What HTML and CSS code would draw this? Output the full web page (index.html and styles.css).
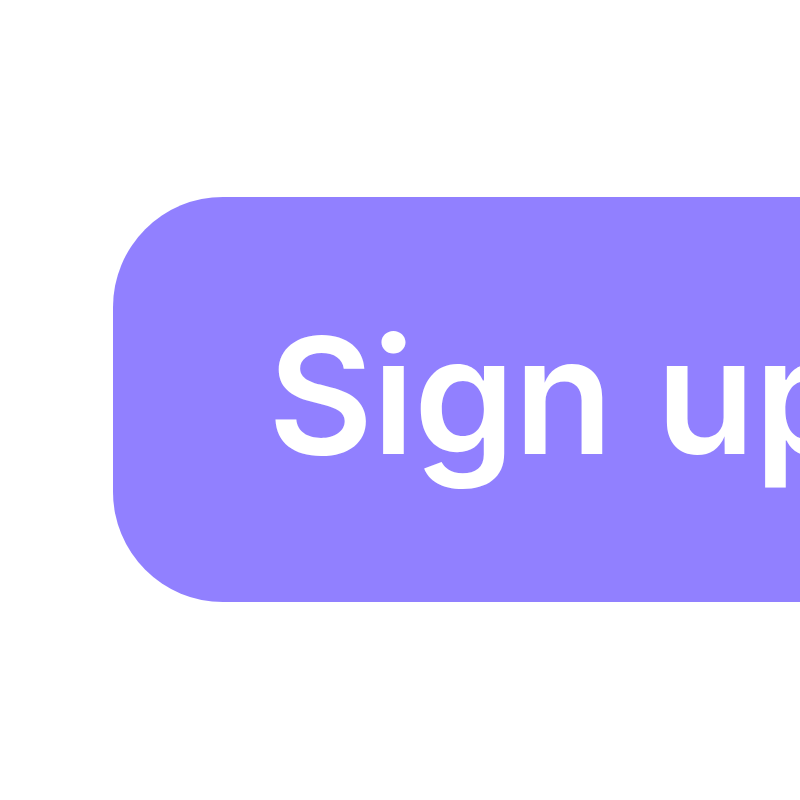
FILE: index.html
```html
<!DOCTYPE html>
<html lang="en">
<head>
<meta charset="UTF-8">
<meta name="viewport" content="width=device-width, initial-scale=1.0">
<title>Sign up</title>
<link rel="stylesheet" href="styles.css">
</head>
<body>
<div class="stage">
  <button class="signup">Sign up</button>
</div>
</body>
</html>
```

FILE: styles.css
```css
body {
  margin: 0;
  background: #ffffff;
  overflow: hidden;
  height: 100vh;
}

.stage {
  display: flex;
  padding: 197px 0 0 113px;
}

.signup {
  flex: none;
  display: flex;
  align-items: center;
  width: 900px;
  height: 405px;
  padding: 0 0 10px 155px;
  border: none;
  border-radius: 110px;
  background: #9180ff;
  color: #ffffff;
  font-family: Inter, "Noto Sans", sans-serif;
  font-size: 162px;
  font-weight: 600;
  letter-spacing: -1px;
  word-spacing: 4px;
  white-space: nowrap;
  cursor: pointer;
}
```
